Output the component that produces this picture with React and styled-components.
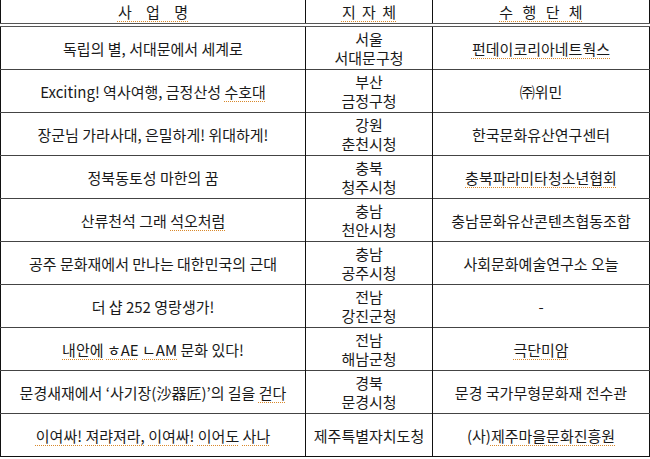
import React from "react";
import styled, { createGlobalStyle } from "styled-components";

const Global = createGlobalStyle`
  html, body { margin: 0; padding: 0; background: #fff; }
  body { font-family: "Noto Sans CJK KR", "Noto Sans", sans-serif; color: #1a1a1a; }
`;

const Table = styled.table`
  border-collapse: collapse;
  table-layout: fixed;
  width: 649px;
  border-left: 1px solid #111;
  border-right: 1px solid #111;
  border-bottom: 1px solid #111;
  font-size: 15px;
`;

const Col = styled.col`
  width: ${(p) => p.$w}px;
`;

const HeadCell = styled.th`
  height: 23px;
  padding: 0;
  font-weight: 400;
  text-align: center;
  word-spacing: ${(p) => p.$ws}px;
  line-height: 20px;
  border-left: 1px solid #111;
  border-bottom: 4px double #555;
  &:first-child { border-left: none; }
`;

const Cell = styled.td`
  height: 42px;
  padding: 0;
  text-align: center;
  vertical-align: middle;
  line-height: 19px;
  white-space: nowrap;
  border-left: 1px solid #111;
  border-top: 1px solid #444;
  &:first-child { border-left: none; }
`;

const Spell = styled.span`
  text-decoration: underline dotted #d9892b;
  text-decoration-thickness: 1px;
  text-underline-offset: 3px;
`;

const rows = [
  [<>독립의 별, 서대문에서 세계로</>, ["서울", "서대문구청"], <Spell>펀데이코리아네트웍스</Spell>],
  [<>Exciting! 역사여행, 금정산성 <Spell>수호대</Spell></>, ["부산", "금정구청"], <>㈜위민</>],
  [<>장군님 가라사대, 은밀하게! 위대하게!</>, ["강원", "춘천시청"], <>한국문화유산연구센터</>],
  [<>정북동토성 마한의 꿈</>, ["충북", "청주시청"], <Spell>충북파라미타청소년협회</Spell>],
  [<>산류천석 그래 <Spell>석오처럼</Spell></>, ["충남", "천안시청"], <>충남문화유산콘텐츠협동조합</>],
  [<>공주 문화재에서 만나는 대한민국의 근대</>, ["충남", "공주시청"], <>사회문화예술연구소 오늘</>],
  [<>더 샵 252 영랑생가!</>, ["전남", "강진군청"], <>-</>],
  [<><Spell>내안에</Spell> <Spell>ㅎAE</Spell> <Spell>ㄴAM</Spell> 문화 있다!</>, ["전남", "해남군청"], <Spell>극단미암</Spell>],
  [<>문경새재에서 ‘사기장(沙器匠)’의 길을 <Spell>걷다</Spell></>, ["경북", "문경시청"], <>문경 국가무형문화재 전수관</>],
  [<><Spell>이여싸!</Spell> <Spell>져랴져라,</Spell> <Spell>이여싸!</Spell> <Spell>이어도</Spell> <Spell>사나</Spell></>, ["제주특별자치도청"], <>(사)<Spell>제주마을문화진흥원</Spell></>],
];

export default function App() {
  return (
    <>
      <Global />
      <Table>
        <colgroup>
          <Col $w={305} />
          <Col $w={127} />
          <Col $w={217} />
        </colgroup>
        <thead>
          <tr>
            <HeadCell $ws={11}><Spell>사 업 명</Spell></HeadCell>
            <HeadCell $ws={3}><Spell>지 자 체</Spell></HeadCell>
            <HeadCell $ws={6}><Spell>수 행 단 체</Spell></HeadCell>
          </tr>
        </thead>
        <tbody>
          {rows.map((r, i) => (
            <tr key={i}>
              <Cell>{r[0]}</Cell>
              <Cell>
                {r[1].length > 1 ? (
                  <>
                    {r[1][0]}
                    <br />
                    {r[1][1]}
                  </>
                ) : (
                  r[1][0]
                )}
              </Cell>
              <Cell>{r[2]}</Cell>
            </tr>
          ))}
        </tbody>
      </Table>
    </>
  );
}
